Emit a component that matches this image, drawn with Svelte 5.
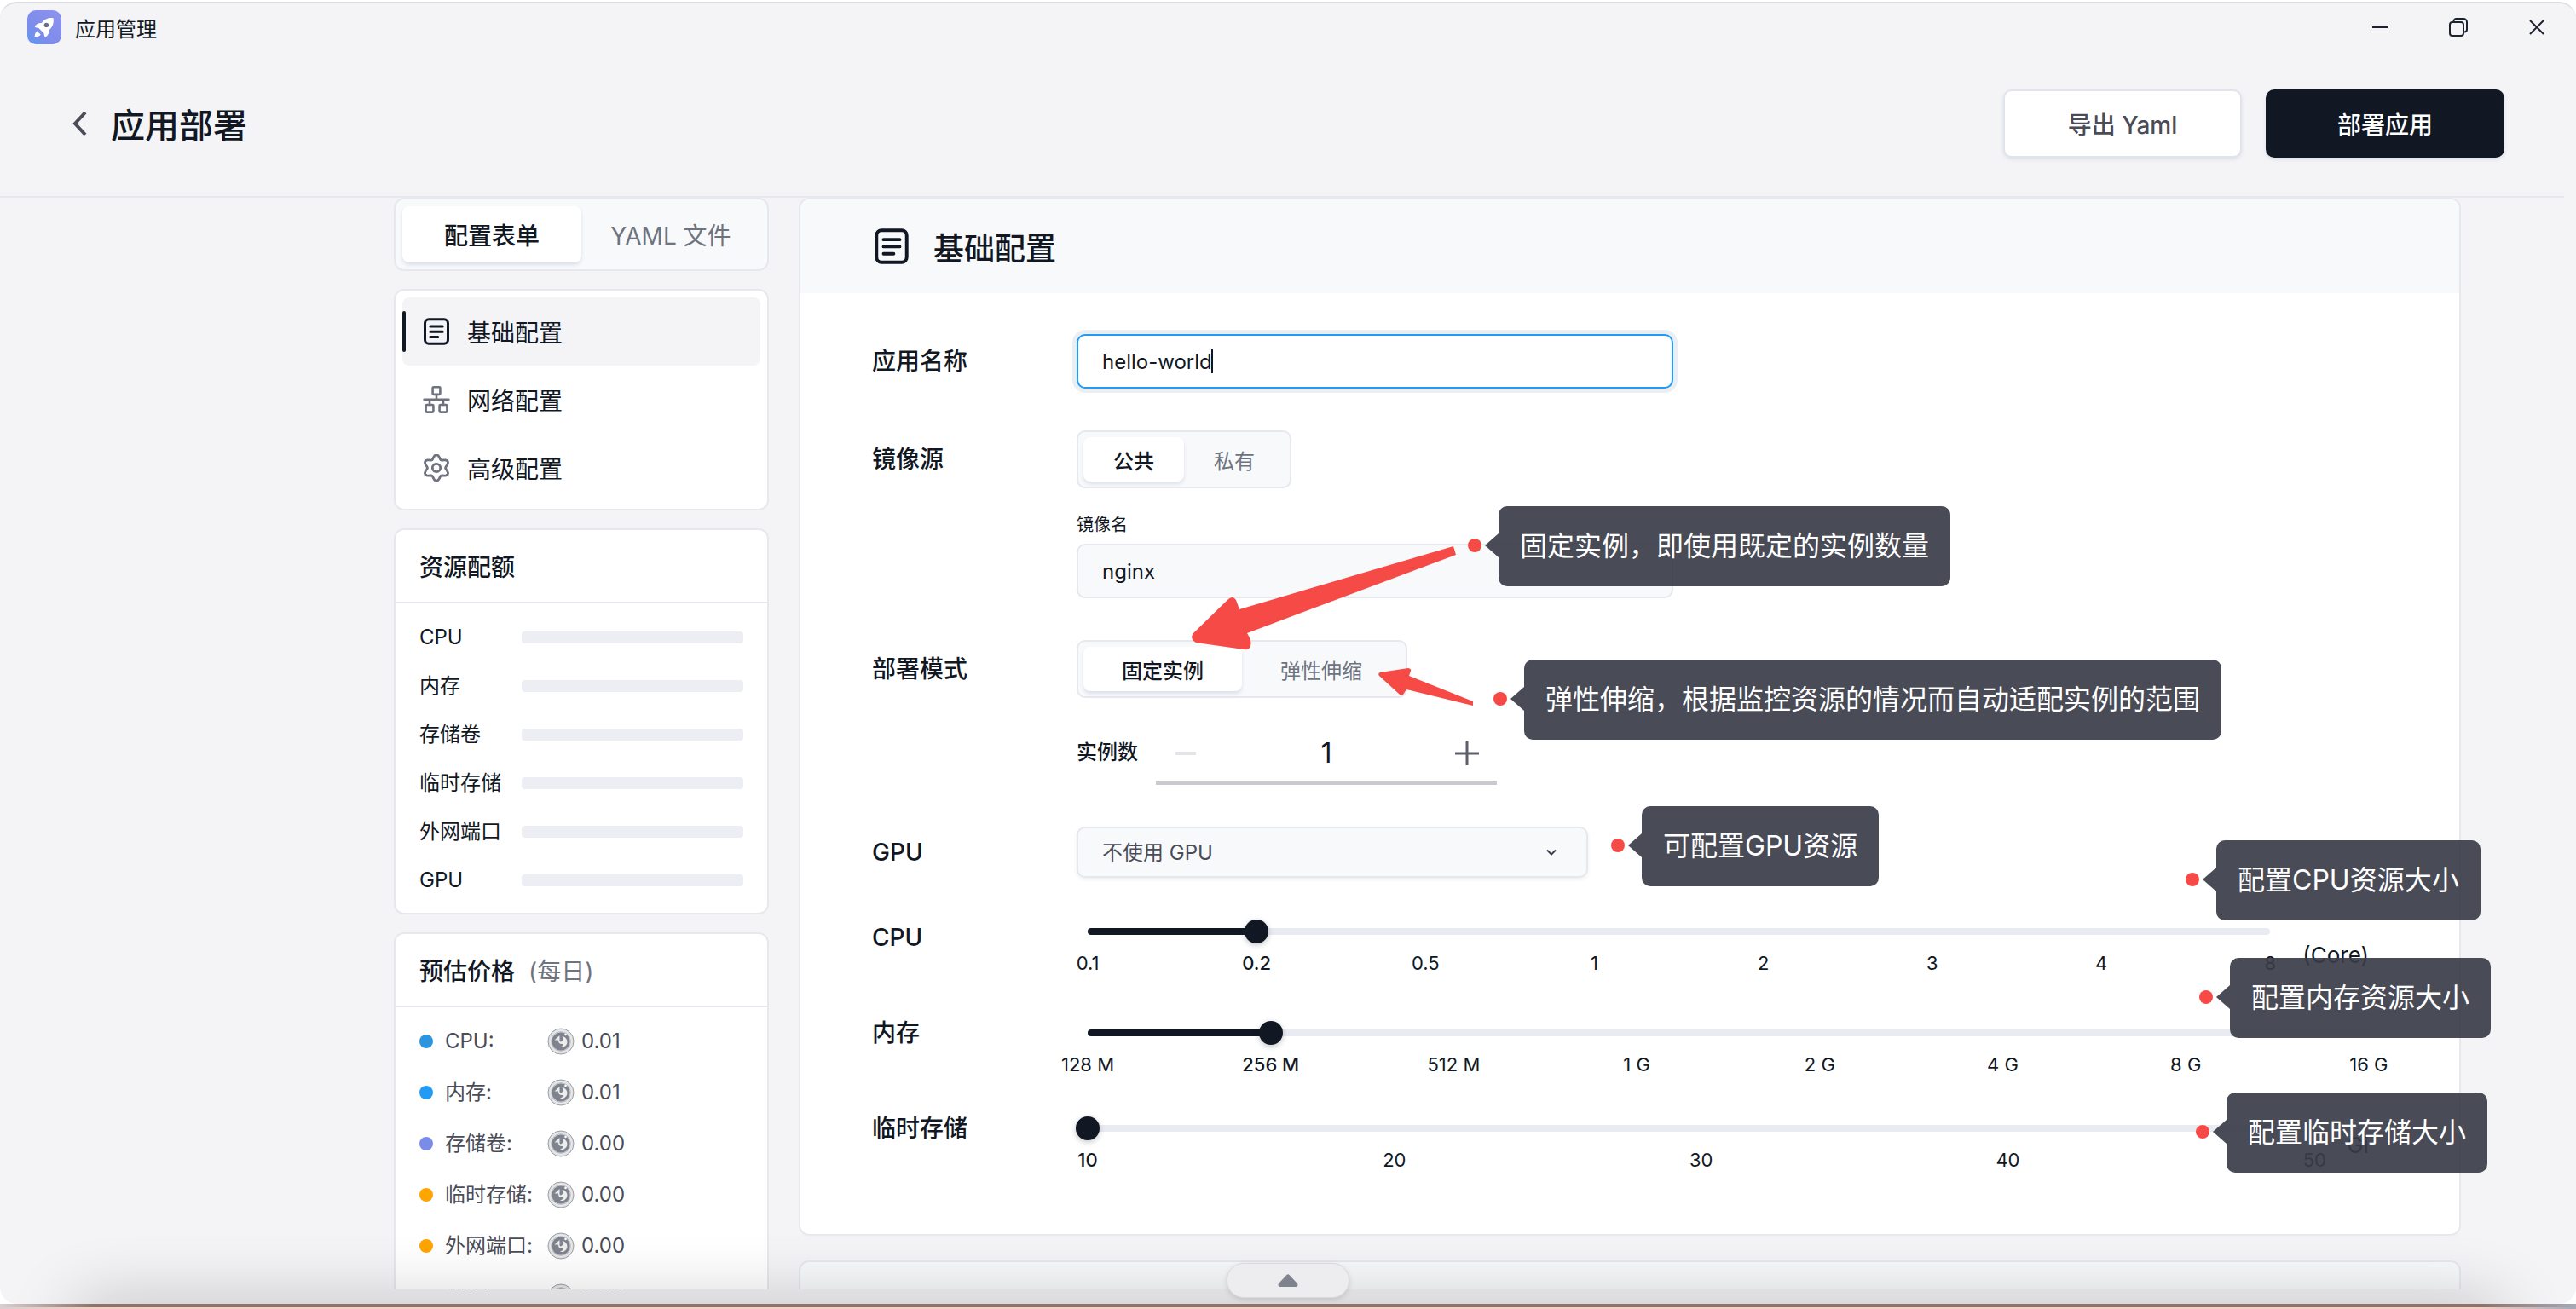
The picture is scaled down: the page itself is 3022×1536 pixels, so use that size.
<script>
  let appName = $state('hello-world');
  let imageName = $state('nginx');
  let gpu = $state('none');
  let replicas = $state(1);
  let source = $state('公共');
  let mode = $state('固定实例');

  const navs = [
    { icon: 'form', label: '基础配置' },
    { icon: 'network', label: '网络配置' },
    { icon: 'gear', label: '高级配置' }
  ];

  const quotas = ['CPU', '内存', '存储卷', '临时存储', '外网端口', 'GPU'];

  const prices = [
    { label: 'CPU', color: '#2b95e0', value: '0.01' },
    { label: '内存', color: '#219bf4', value: '0.01' },
    { label: '存储卷', color: '#7b8be8', value: '0.00' },
    { label: '临时存储', color: '#ffa500', value: '0.00' },
    { label: '外网端口', color: '#ffa500', value: '0.00' },
    { label: 'GPU', color: '#8c7f7a', value: '0.00' }
  ];

  let sliders = $state([
    { id: 'cpu', label: 'CPU', marks: ['0.1', '0.2', '0.5', '1', '2', '3', '4', '8'], value: 1, unit: '(Core)' },
    { id: 'memory', label: '内存', marks: ['128 M', '256 M', '512 M', '1 G', '2 G', '4 G', '8 G', '16 G'], value: 1, unit: '' },
    { id: 'storage', label: '临时存储', marks: ['10', '20', '30', '40', '50'], value: 0, unit: 'Gi' }
  ]);

  // notes pinned on top of the page, x/y is the red dot
  const notes = [
    { x: 1730, y: 640, text: '固定实例，即使用既定的实例数量' },
    { x: 1760, y: 820, text: '弹性伸缩，根据监控资源的情况而自动适配实例的范围' },
    { x: 1898, y: 992, text: '可配置GPU资源' },
    { x: 2572, y: 1032, text: '配置CPU资源大小' },
    { x: 2588, y: 1170, text: '配置内存资源大小' },
    { x: 2584, y: 1328, text: '配置临时存储大小' }
  ];

  // six-lobed gear outline
  const gear = Array.from({ length: 90 }, (_, i) => {
    const a = (i / 90) * Math.PI * 2;
    const r = 12.9 + 2.3 * Math.cos(6 * a);
    return `${(16 + r * Math.sin(a)).toFixed(2)},${(16 - r * Math.cos(a)).toFixed(2)}`;
  }).join(' ');
</script>

{#snippet icon(name)}
  <svg class="icon" viewBox="0 0 32 32" fill="none" stroke="currentColor" stroke-width="3" stroke-linecap="round" stroke-linejoin="round" aria-hidden="true">
    {#if name === 'form'}
      <rect x="2.5" y="1.7" width="27" height="28.6" rx="4.5" />
      <path d="M8.8 10h14.4M8.8 16.3h14.4M8.8 22.6h9" />
    {:else if name === 'network'}
      <g stroke-width="2.6">
        <rect x="11.6" y="1.3" width="8.8" height="8.6" rx="1" />
        <rect x="3.6" y="22" width="8.8" height="8.6" rx="1" />
        <rect x="19.6" y="22" width="8.8" height="8.6" rx="1" />
        <path d="M1.6 15.8h28.8M16 10v6M8 16v6M24 16v6" />
      </g>
    {:else}
      <polygon points={gear} stroke-width="2.8" />
      <circle cx="16" cy="16" r="4.7" stroke-width="2.8" />
    {/if}
  </svg>
{/snippet}

{#snippet segment(items, current, pick)}
  <div class="segment">
    {#each items as item}
      <button type="button" class:active={item === current} onclick={() => pick(item)}>{item}</button>
    {/each}
  </div>
{/snippet}

<div class="window">
  <header class="titlebar">
    <svg class="logo" viewBox="0 0 40 40" aria-hidden="true">
      <defs>
        <linearGradient id="logo-bg" x1="0" y1="1" x2="1" y2="0">
          <stop offset="0" stop-color="#5f97f0" />
          <stop offset="0.35" stop-color="#7d8cec" />
          <stop offset="1" stop-color="#8e92ee" />
        </linearGradient>
      </defs>
      <rect width="40" height="40" rx="10" fill="url(#logo-bg)" />
      <path d="M30.600 9.200c.8 5-.4 9.600-4 13l-1.200 1.200c.3 3.200-.6 5.500-3.400 7.800-.8.6-1.600.3-1.800-.7l-.8-3.600-6-6-3.500-.7c-1-.2-1.300-1.100-.7-1.900 2-2.600 4.400-3.600 7.600-3.400l1-1.200c3.400-4 7.800-5.300 12.800-4.500z" fill="#fff" />
      <circle cx="22.4" cy="17.4" r="2.7" fill="#6a6f86" />
      <path d="M11.600 24.600l4 4c-.2 1.400-3.200 3-6.200 3.200-.6 0-.9-.4-.8-1 .3-3 1.600-5.800 3-6.200z" fill="#fff" />
    </svg>
    <span class="app-title">应用管理</span>
    <div class="controls">
      <button type="button" aria-label="最小化">
        <svg viewBox="0 0 24 24"><path d="M3 12h18" /></svg>
      </button>
      <button type="button" aria-label="还原">
        <svg viewBox="0 0 24 24"><rect x="2" y="6" width="16" height="16" rx="3" /><path d="M6.500 5a3 3 0 0 1 3-3H18a4 4 0 0 1 4 4v8.500a3 3 0 0 1-3 3" /></svg>
      </button>
      <button type="button" aria-label="关闭">
        <svg viewBox="0 0 24 24"><path d="M4 4l16 16M20 4L4 20" /></svg>
      </button>
    </div>
  </header>

  <div class="toolbar">
    <button type="button" class="back" aria-label="返回">
      <svg viewBox="0 0 20 32"><path d="M16 3L4 16l12 13" /></svg>
    </button>
    <h1>应用部署</h1>
    <button type="button" class="btn plain">导出 Yaml</button>
    <button type="button" class="btn dark">部署应用</button>
  </div>

  <div class="content">
    <aside>
      <div class="tabs">
        <button type="button" class="active">配置表单</button>
        <button type="button">YAML 文件</button>
      </div>

      <nav class="card">
        {#each navs as nav, i}
          <a href="#{nav.icon}" class:active={i === 0}>
            {@render icon(nav.icon)}
            <span>{nav.label}</span>
          </a>
        {/each}
      </nav>

      <section class="card">
        <h2>资源配额</h2>
        <ul class="quotas">
          {#each quotas as quota}
            <li><span>{quota}</span><div class="bar"></div></li>
          {/each}
        </ul>
      </section>

      <section class="card">
        <h2>预估价格 <small>(每日)</small></h2>
        <ul class="prices">
          {#each prices as price}
            <li>
              <i class="dot" style="background: {price.color}"></i>
              <span class="name">{price.label}:</span>
              <svg class="coin" viewBox="0 0 32 32" aria-hidden="true">
                <circle cx="16" cy="16" r="15" fill="#e2e3e5" stroke="#9a9da4" stroke-width="1" />
                <circle cx="16" cy="16" r="12.500" fill="#c3c5ca" stroke="#eeeff1" stroke-width="1" />
                <circle cx="16" cy="16" r="10.500" fill="#7f838d" />
                <path d="M8.500 14.500l6-5.500v5.500c-.4 2.200 2.300 2.600 3.300.6 1-1.800.7-3.600-.3-5.100 4 .5 6.500 4 5.800 7.700-.8 4-4.600 6-8.300 5 2.500-.7 3.600-2 3.500-3.700-3.500.6-5.700-1-5.500-4.500z" fill="#eceded" />
                <circle cx="21.500" cy="8" r="1.300" fill="#fff" />
              </svg>
              <span>{price.value}</span>
            </li>
          {/each}
        </ul>
      </section>
    </aside>

    <main>
      <form class="card">
        <div class="card-head">
          {@render icon('form')}
          <h2>基础配置</h2>
        </div>
        <div class="fields">
          <div class="row">
            <label class="label" for="app-name">应用名称</label>
            <div class="text-box">
              <input id="app-name" class="focused" bind:value={appName} />
              <span class="caret"></span>
            </div>
          </div>

          <div class="row segment-row">
            <span class="label">镜像源</span>
            <div class="stack">
              {@render segment(['公共', '私有'], source, (v) => (source = v))}
              <label class="sub-label" for="image-name">镜像名</label>
              <div class="text-box">
                <input id="image-name" bind:value={imageName} />
              </div>
            </div>
          </div>

          <div class="row segment-row">
            <span class="label">部署模式</span>
            <div class="stack wide">
              {@render segment(['固定实例', '弹性伸缩'], mode, (v) => (mode = v))}
              <div class="replicas">
                <label for="replicas">实例数</label>
                <div class="stepper">
                  <button type="button" aria-label="减少" disabled={replicas <= 1} onclick={() => replicas--}>
                    <svg viewBox="0 0 28 28"><path d="M2 14h24" stroke-width="4" /></svg>
                  </button>
                  <input id="replicas" inputmode="numeric" bind:value={replicas} />
                  <button type="button" aria-label="增加" onclick={() => replicas++}>
                    <svg viewBox="0 0 28 28"><path d="M0 14h28M14 0v28" stroke-width="3" /></svg>
                  </button>
                </div>
              </div>
            </div>
          </div>

          <div class="row select-row">
            <label class="label" for="gpu">GPU</label>
            <div class="select">
              <select id="gpu" bind:value={gpu}>
                <option value="none">不使用 GPU</option>
              </select>
              <svg viewBox="0 0 16 16" aria-hidden="true"><path d="M3 5.500l5 5 5-5" /></svg>
            </div>
          </div>

          {#each sliders as slider}
            <div class="row slider-row {slider.id}">
              <label class="label" for={slider.id}>{slider.label}</label>
              <div class="slider">
                <div class="track">
                  <div class="fill" style="width: {(slider.value / (slider.marks.length - 1)) * 100}%"></div>
                  <input id={slider.id} type="range" min="0" max={slider.marks.length - 1} bind:value={slider.value} />
                </div>
                <div class="marks">
                  {#each slider.marks as mark, i}
                    <span class:active={i === slider.value}>{mark}</span>
                  {/each}
                </div>
              </div>
              {#if slider.unit}
                <span class="unit">{slider.unit}</span>
              {/if}
            </div>
          {/each}
        </div>
      </form>

      <section class="card next"></section>
    </main>
  </div>

  <div class="dock-shadow"></div>
  <button type="button" class="dock-handle" aria-label="展开">
    <svg viewBox="0 0 24 16"><path d="M10.300 1.200a2.400 2.400 0 0 1 3.400 0l9 9.500c1.600 2 .8 4.300-1.400 4.300H2.700C.5 15-.3 12.700 1.300 10.700z" /></svg>
  </button>
</div>

<svg class="arrows" aria-hidden="true">
  <path d="M1705 641L1708 651L1463 743Q1469 752 1467 758Q1466 763 1459 762L1403 754Q1395 749 1400 743L1440 704Q1446 698 1450 704L1454 715Z" />
  <path d="M1619 789L1652 784Q1656 785 1655 787L1653 793L1728 823L1728 828L1650 809L1646 815Q1643 817 1641 814L1618 793Q1616 790 1619 789Z" />
</svg>

{#each notes as note}
  <div class="note" style="left: {note.x}px; top: {note.y}px">{note.text}</div>
{/each}

<style>
  :global(body) {
    background: #fff;
  }

  :global(#app) {
    position: relative;
    height: 100vh;
    overflow: hidden;
    box-sizing: border-box;
    padding: 2px 0 6px;
    background: linear-gradient(#fff 50%, transparent 50%),
      linear-gradient(to right, #d9cfd0, transparent 110px calc(100% - 110px), #a6a8b6) bottom / 100% 6px no-repeat,
      linear-gradient(#8f736c 4px, #f1d0c5 4px) bottom / 100% 6px no-repeat;
    font-family: Inter, 'Noto Sans CJK SC', sans-serif;
    color: #111824;
  }

  .window, .window *, .note {
    box-sizing: border-box;
  }

  button, input, select {
    font: inherit;
    color: inherit;
    border: none;
    background: none;
    padding: 0;
    margin: 0;
    outline: none;
  }

  h1, h2, ul {
    margin: 0;
    padding: 0;
  }

  svg {
    display: block;
    flex: none;
  }

  .window {
    position: relative;
    display: flex;
    flex-direction: column;
    height: 100%;
    overflow: hidden;
    border-top: 2px solid #dddde1;
    border-radius: 20px;
    background: #f4f4f7;
  }

  .titlebar {
    display: flex;
    align-items: center;
    flex: none;
    height: 56px;
    padding-left: 32px;
  }

  .logo {
    width: 40px;
    height: 40px;
    margin-right: 16px;
  }

  .app-title {
    font-size: 24px;
  }

  .controls {
    display: flex;
    margin-left: auto;
  }

  .controls button {
    display: grid;
    place-items: center;
    width: 92px;
    height: 56px;
  }

  .controls svg {
    width: 24px;
    height: 24px;
    fill: none;
    stroke: #1c2230;
    stroke-width: 2;
  }

  .toolbar {
    display: flex;
    align-items: center;
    flex: none;
    height: 172px;
    margin-right: 14px;
    padding: 0 70px 0 84px;
    border-bottom: 2px solid #e7e8ed;
  }

  .back svg {
    width: 20px;
    height: 32px;
    fill: none;
    stroke: #4a4c57;
    stroke-width: 4;
  }

  h1 {
    margin: 0 auto 0 26px;
    font-size: 40px;
    font-weight: 500;
  }

  .btn {
    width: 280px;
    height: 80px;
    margin-left: 28px;
    border-radius: 10px;
    font-size: 28px;
    font-weight: 500;
    box-shadow: 0 2px 4px rgba(19, 51, 107, 0.1);
  }

  .plain {
    background: #fff;
    border: 2px solid #e1e4ea;
    color: #4a4c57;
  }

  .dark {
    background: #111824;
    color: #fff;
  }

  .content {
    display: flex;
    flex: 1;
    min-height: 0;
    gap: 35px;
    margin-bottom: 17px;
    padding: 0 135px 0 462px;
    overflow: hidden;
  }

  aside {
    flex: none;
    width: 440px;
  }

  aside > * + * {
    margin-top: 21px;
  }

  .card {
    border: 2px solid #e7e8ed;
    border-radius: 12px;
    background: #fff;
  }

  .tabs {
    display: flex;
    padding: 8px;
    border: 2px solid #e7e8ed;
    border-radius: 12px;
    background: #f8f9fb;
  }

  .tabs button {
    flex: 1;
    height: 66px;
    border-radius: 8px;
    font-size: 28px;
    color: #6e7380;
  }

  .tabs .active, .segment .active {
    background: #fff;
    color: #111824;
    font-weight: 500;
    box-shadow: 0 3px 4px rgba(19, 51, 107, 0.12);
  }

  nav {
    padding: 8px;
  }

  nav a {
    position: relative;
    display: flex;
    align-items: center;
    gap: 20px;
    height: 80px;
    padding-left: 24px;
    border-radius: 8px;
    font-size: 28px;
    color: #111824;
    text-decoration: none;
  }

  .icon {
    width: 32px;
    height: 32px;
  }

  nav .icon {
    color: #6e7380;
  }

  nav .active {
    background: #f4f4f7;
  }

  nav .active .icon {
    color: #111824;
  }

  nav .active::before {
    content: '';
    position: absolute;
    left: 0;
    top: 16px;
    width: 4px;
    height: 48px;
    border-radius: 2px;
    background: #111824;
  }

  aside h2 {
    display: flex;
    align-items: center;
    gap: 16px;
    height: 86px;
    padding-left: 28px;
    border-bottom: 2px solid #e7e8ed;
    font-size: 28px;
    font-weight: 500;
  }

  aside small {
    font-size: 28px;
    font-weight: 400;
    color: #6e7380;
  }

  aside ul {
    display: flex;
    flex-direction: column;
    padding: 22px 28px 20px;
    list-style: none;
    font-size: 24px;
    line-height: 36px;
  }

  aside li {
    display: flex;
    align-items: center;
  }

  .quotas {
    gap: 21px;
  }

  .quotas span {
    width: 120px;
  }

  .bar {
    flex: 1;
    height: 14px;
    border-radius: 4px;
    background: #eceef4;
  }

  .prices {
    gap: 24px;
    color: #4a4c57;
  }

  .dot {
    width: 16px;
    height: 16px;
    border-radius: 50%;
  }

  .name {
    width: 120px;
    margin-left: 14px;
  }

  .coin {
    width: 32px;
    height: 32px;
    margin-right: 8px;
  }

  main {
    flex: 1;
    min-width: 0;
  }

  .card-head {
    display: flex;
    align-items: center;
    gap: 28px;
    height: 110px;
    padding-left: 86px;
    border-radius: 10px 10px 0 0;
    background: #f8f9fb;
  }

  .card-head .icon {
    width: 42px;
    height: 42px;
  }

  .card-head h2 {
    font-size: 36px;
    font-weight: 500;
  }

  .fields {
    display: flex;
    flex-direction: column;
    gap: 49px;
    padding: 48px 84px 75px;
  }

  .row {
    display: flex;
    align-items: flex-start;
  }

  .label {
    flex: none;
    width: 240px;
    font-size: 28px;
    font-weight: 500;
    line-height: 64px;
  }

  .segment-row .label {
    line-height: 68px;
  }

  .select-row .label {
    line-height: 60px;
  }

  .stack {
    display: flex;
    flex-direction: column;
    align-items: flex-start;
  }

  .text-box {
    position: relative;
    width: 700px;
  }

  .text-box input {
    display: block;
    width: 100%;
    height: 64px;
    padding: 0 28px;
    border: 2px solid #e7e8ed;
    border-radius: 10px;
    background: #f8f9fb;
    font-size: 24px;
  }

  .text-box .focused {
    border-color: #219bf4;
    background: #fff;
    box-shadow: 0 0 0 5px #eaeef5;
  }

  .caret {
    position: absolute;
    left: 158px;
    top: 18px;
    width: 2px;
    height: 28px;
    background: #111824;
  }

  .segment {
    display: flex;
    width: 252px;
    padding: 6px;
    border: 2px solid #e7e8ed;
    border-radius: 10px;
    background: #f8f9fb;
  }

  .wide .segment {
    width: 388px;
  }

  .segment button {
    flex: 1;
    height: 52px;
    border-radius: 8px;
    font-size: 24px;
    color: #6e7380;
  }

  .segment .active {
    color: #111824;
  }

  .sub-label {
    margin: 28px 0 7px;
    font-size: 20px;
    line-height: 30px;
  }

  .replicas {
    display: flex;
    gap: 21px;
    margin-top: 32px;
    font-size: 24px;
    line-height: 64px;
  }

  .replicas label {
    font-weight: 500;
  }

  .stepper {
    display: flex;
    align-items: center;
    justify-content: space-between;
    width: 400px;
    height: 70px;
    padding: 0 21px;
    border-bottom: 4px solid #c8cacf;
  }

  .stepper input {
    width: 200px;
    text-align: center;
    font-size: 32px;
  }

  .stepper svg {
    width: 28px;
    height: 28px;
    stroke: #5a5f6b;
  }

  .stepper button:disabled svg {
    stroke: #e3e4e8;
  }

  .select {
    position: relative;
    width: 600px;
  }

  .select select {
    appearance: none;
    display: block;
    width: 100%;
    height: 60px;
    padding: 0 28px;
    border: 2px solid #e7e8ed;
    border-radius: 10px;
    background: #f8f9fb;
    box-shadow: 0 2px 4px rgba(19, 51, 107, 0.08);
    font-size: 24px;
    color: #4a4c57;
  }

  .select svg {
    position: absolute;
    right: 35px;
    top: 22px;
    width: 16px;
    height: 16px;
    fill: none;
    stroke: #3b404c;
    stroke-width: 2;
    pointer-events: none;
  }

  .slider-row {
    height: 63px;
    padding-right: 22px;
  }

  .slider-row .label {
    line-height: 28px;
  }

  .slider-row.cpu {
    height: 70px;
  }

  .cpu .label {
    line-height: 42px;
  }

  .slider {
    flex: 1;
    margin-left: 13px;
  }

  .track {
    position: relative;
    height: 8px;
    margin: 10px 0 24px;
    border-radius: 4px;
    background: #e9ebf2;
  }

  .fill {
    height: 8px;
    border-radius: 4px;
    background: #111824;
  }

  .track input {
    appearance: none;
    position: absolute;
    left: -14px;
    top: -10px;
    width: calc(100% + 28px);
    height: 28px;
  }

  .track input::-webkit-slider-thumb {
    appearance: none;
    width: 28px;
    height: 28px;
    border-radius: 50%;
    background: #111824;
    box-shadow: 0 2px 6px rgba(17, 24, 36, 0.25);
  }

  .marks {
    display: flex;
    justify-content: space-between;
    font-size: 22px;
    line-height: 18px;
    white-space: nowrap;
  }

  .marks span {
    display: flex;
    justify-content: center;
    width: 0;
  }

  .marks .active {
    font-weight: 500;
  }

  .unit {
    margin: 13px 0 0 38px;
    font-size: 26px;
    line-height: 42px;
  }

  .cpu .unit {
    margin-top: 21px;
  }

  .next {
    height: 300px;
    margin-top: 29px;
    background: #f8f9fb;
  }

  .dock-shadow {
    position: absolute;
    left: 90px;
    right: 90px;
    bottom: -60px;
    height: 60px;
    box-shadow: 0 0 80px rgba(0, 0, 0, 0.24);
    pointer-events: none;
  }

  .dock-handle {
    position: absolute;
    left: calc(50% - 72px);
    bottom: 7px;
    display: grid;
    place-items: center;
    width: 144px;
    height: 41px;
    border: 1px solid #d9dadd;
    border-radius: 20px;
    background: #ededf0;
    box-shadow: 0 2px 6px rgba(0, 0, 0, 0.12);
  }

  .dock-handle svg {
    width: 24px;
    height: 16px;
    fill: #7f838e;
  }

  .arrows {
    position: absolute;
    left: 0;
    top: 0;
    width: 100%;
    height: 100%;
    fill: #f54a45;
    pointer-events: none;
  }

  .note {
    position: absolute;
    height: 94px;
    margin: -46px 0 0 28px;
    padding: 0 25px;
    border-radius: 10px;
    background: rgba(58, 60, 72, 0.92);
    color: #fff;
    font-size: 32px;
    line-height: 94px;
    white-space: nowrap;
  }

  .note::before {
    content: '';
    position: absolute;
    left: -36px;
    top: 38px;
    width: 16px;
    height: 16px;
    border-radius: 50%;
    background: #f54a45;
  }

  .note::after {
    content: '';
    position: absolute;
    left: -16px;
    top: 32px;
    border: 14px solid transparent;
    border-left: none;
    border-right: 16px solid rgba(58, 60, 72, 0.92);
  }
</style>
